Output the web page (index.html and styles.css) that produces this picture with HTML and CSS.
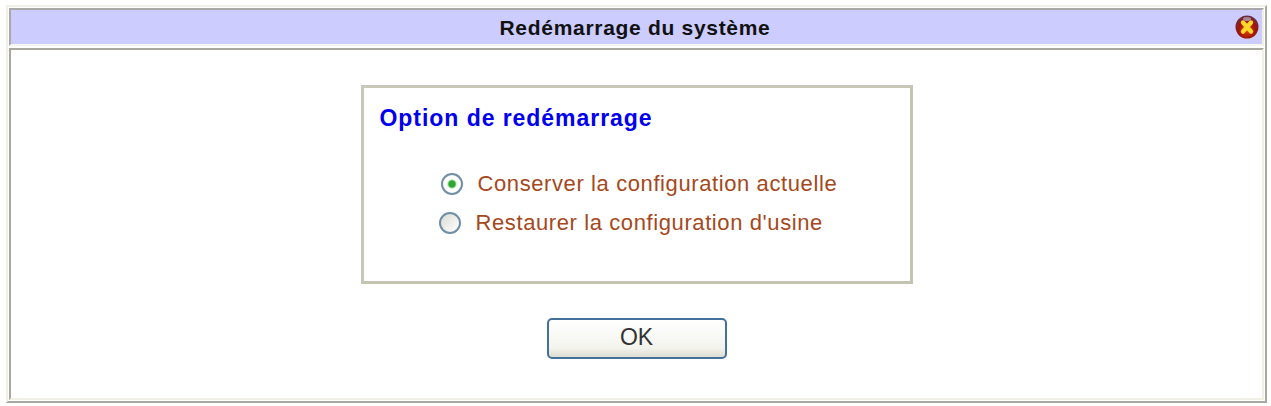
FILE: index.html
```html
<!DOCTYPE html>
<html lang="fr">
<head>
    <meta charset="UTF-8">
    <title>Redémarrage du système</title>
    <link rel="stylesheet" href="styles.css">
</head>
<body>

<div class="dialog">
    <div class="title-bar">
        <h1>Redémarrage du système</h1>
        <svg class="close-icon" width="24" height="24" viewBox="0 0 24 24" aria-label="Fermer">
            <defs>
                <radialGradient id="closeBg" cx="50%" cy="62%" r="58%">
                    <stop offset="0%" stop-color="#e84a00"/>
                    <stop offset="65%" stop-color="#a01408"/>
                    <stop offset="100%" stop-color="#6c2c44"/>
                </radialGradient>
            </defs>
            <circle cx="12" cy="12" r="11.5" fill="url(#closeBg)"/>
            <ellipse cx="12" cy="4" rx="4" ry="2" fill="#a88890"/>
            <path d="M8 7.5 L16 16.5 M16 7.5 L8 16.5" stroke="#fbd92c" stroke-width="4.4" stroke-linecap="round"/>
        </svg>
    </div>

    <div class="content">
        <form class="options-box">
            <h2>Option de redémarrage</h2>
            <label class="option">
                <input type="radio" name="restart" checked>
                <span>Conserver la configuration actuelle</span>
            </label>
            <label class="option second">
                <input type="radio" name="restart">
                <span>Restaurer la configuration d'usine</span>
            </label>
        </form>
        <button class="ok-button" type="button">OK</button>
    </div>
</div>

</body>
</html>
```

FILE: styles.css
```css
/* Global styles */
body {
    font-family: "Liberation Sans", Arial, sans-serif;
    margin: 0;
    padding: 5px 4px 0 6px;
    background-color: #fff;
}

.dialog {
    display: flex;
    flex-direction: column;
    gap: 2px;
    height: 398px;
    box-sizing: border-box;
    padding: 1px;
    border: 2px solid;
    border-color: #f0f0e4 #a8a8a0 #a8a8a0 #f0f0e4;
}

/* Title */
.title-bar {
    display: flex;
    align-items: center;
    justify-content: center;
    position: relative;
    height: 38px;
    box-sizing: border-box;
    padding: 1px 3px 0 0;
    background-color: #ccccff;
    border: 2px solid;
    border-color: #a8a8a8 #f0f0e4 #f6f6ee #a8a8a8;
}
h1 {
    margin: 0;
    font-size: 21px;
    font-weight: bold;
    letter-spacing: 0.7px;
    color: #111;
}
.close-icon {
    position: absolute;
    right: 3px;
    top: 5px;
}

/* Main panel */
.content {
    flex: 1;
    display: flex;
    flex-direction: column;
    align-items: center;
    box-sizing: border-box;
    padding-top: 35px;
    border: 2px solid;
    border-color: #a8a8a0 #f0f0e4 #f0f0e4 #a8a8a0;
}

.options-box {
    width: 552px;
    height: 199px;
    box-sizing: border-box;
    padding: 17px 16px;
    border: 3px solid;
    border-color: #c8c8b8 #c4c4b2 #c4c4b2 #c8c8b8;
}
h2 {
    margin: 0 0 32px;
    font-size: 23px;
    font-weight: bold;
    letter-spacing: 0.95px;
    color: #0000ee;
}

.option {
    display: flex;
    align-items: center;
    gap: 15px;
    height: 39px;
    padding-left: 61px;
    font-size: 22px;
    letter-spacing: 0.6px;
    color: #a5481c;
}
.option.second {
    padding-left: 59px;
}
input[type="radio"] {
    appearance: none;
    flex: none;
    width: 22px;
    height: 22px;
    margin: 0;
    border: 2px solid #6f8fa6;
    border-radius: 50%;
    background: linear-gradient(135deg, #dcdcd4, #fff);
}
input[type="radio"]:checked {
    background: radial-gradient(circle, #2ea82e 0, #2ea82e 3px, #fff 5px);
}

.ok-button {
    margin-top: 34px;
    width: 180px;
    height: 41px;
    padding: 0 0 3px;
    border: 2px solid #44709c;
    border-radius: 5px;
    background: linear-gradient(#fff, #f4f4ee 75%, #dcdcd0);
    font-family: "Liberation Sans", Arial, sans-serif;
    font-size: 23px;
    color: #333;
}
```
